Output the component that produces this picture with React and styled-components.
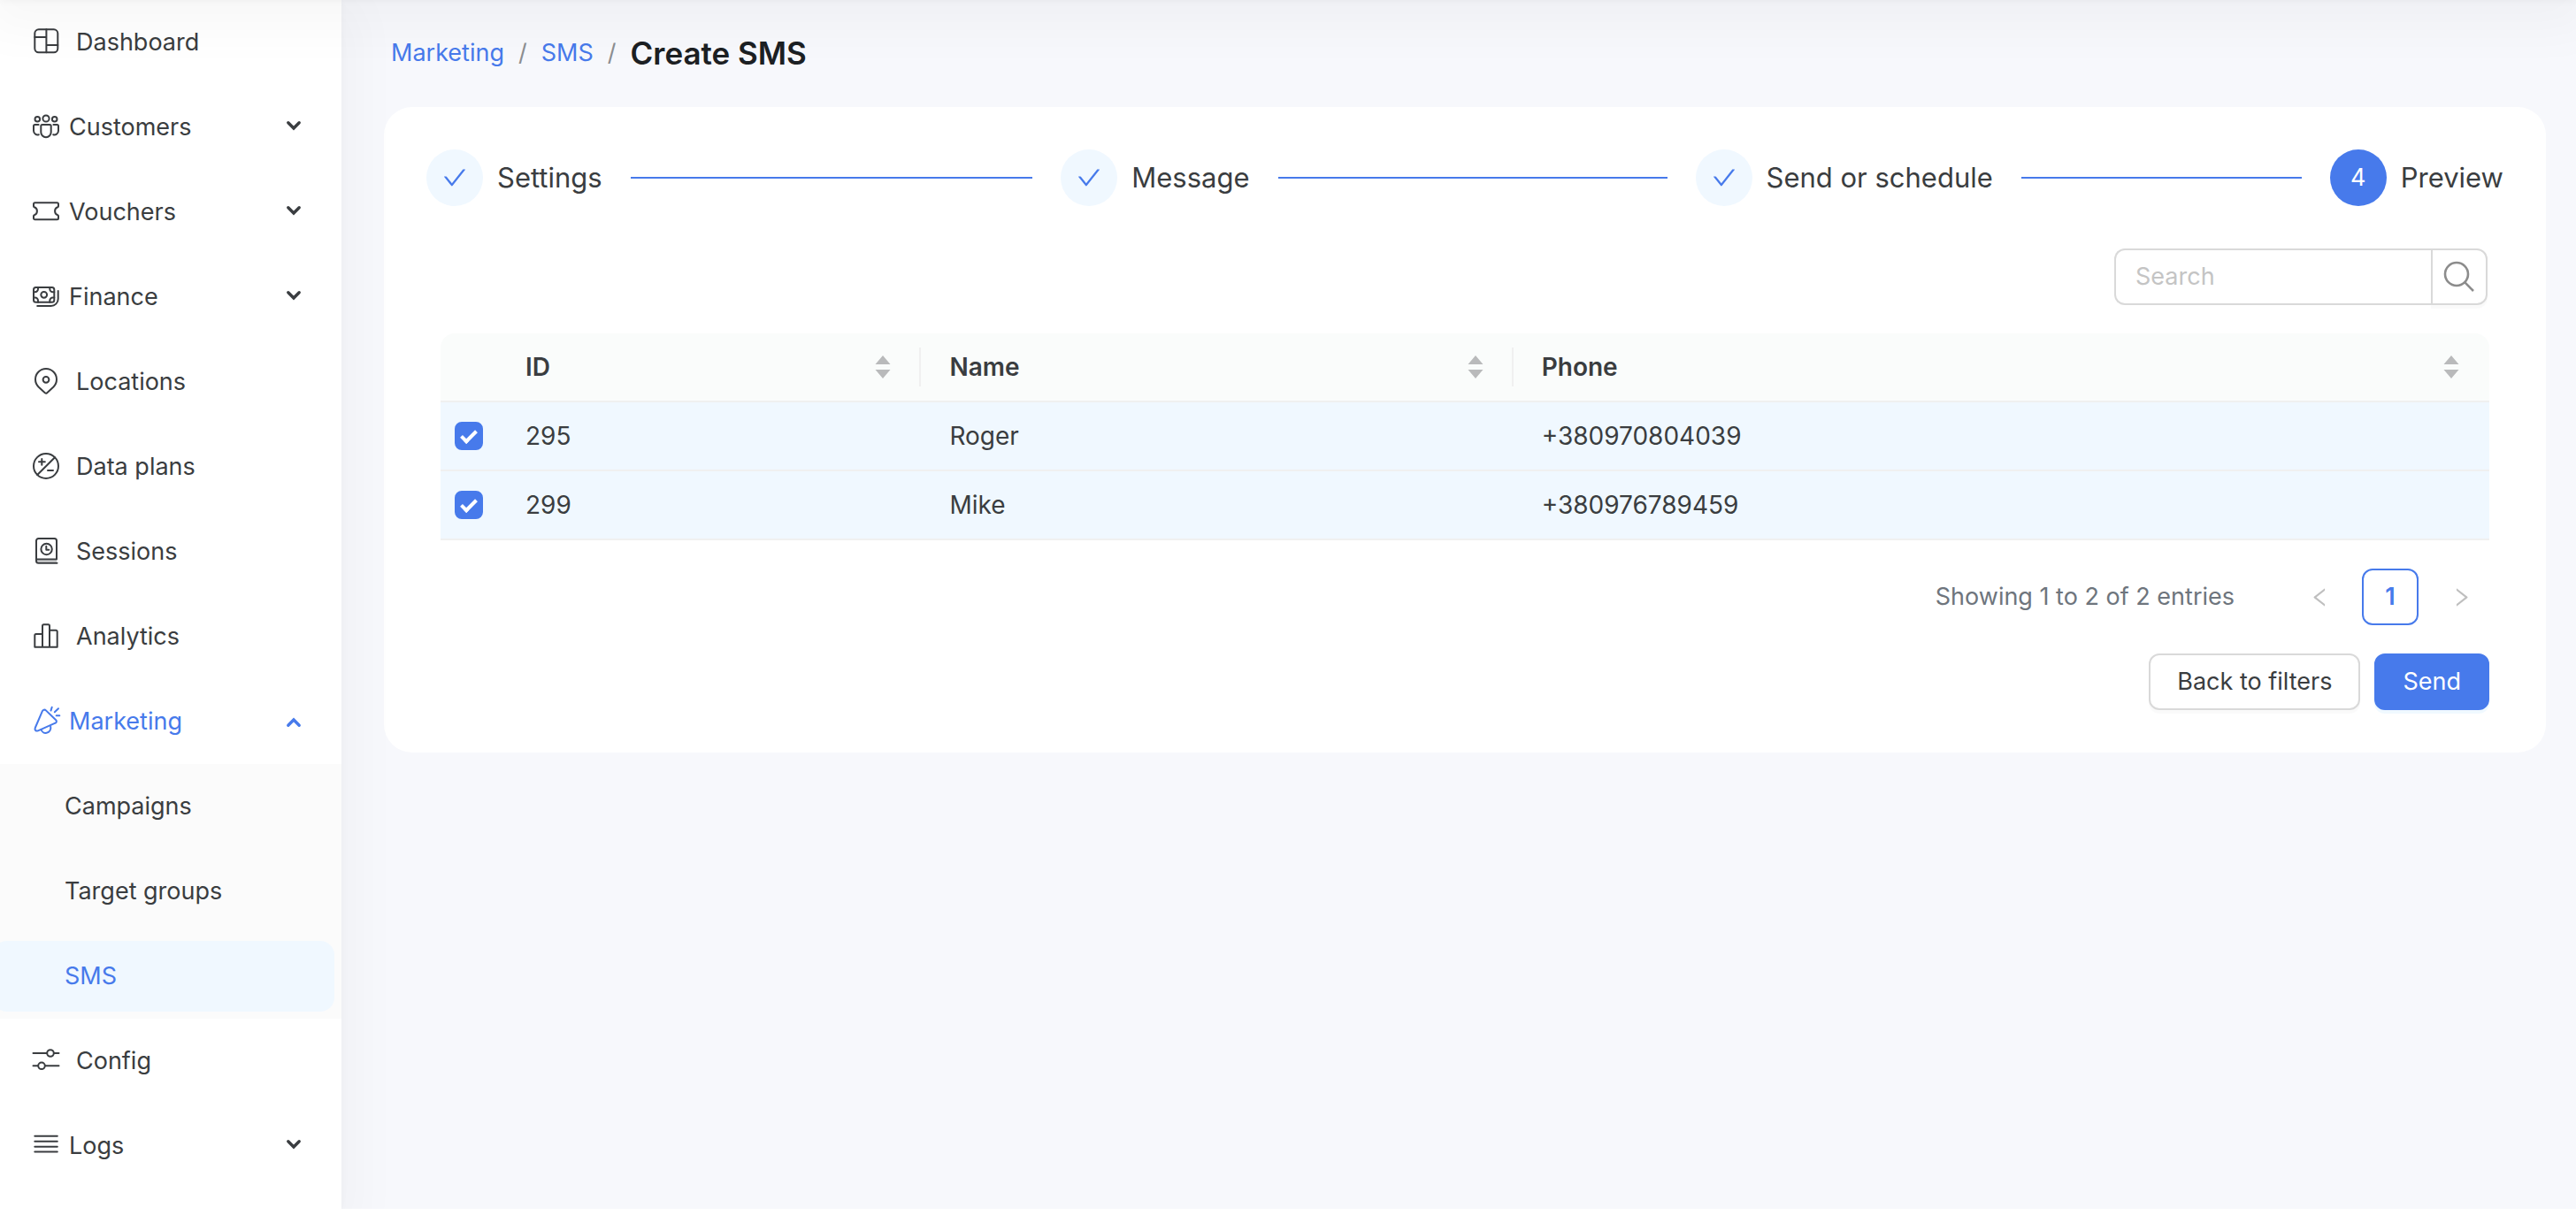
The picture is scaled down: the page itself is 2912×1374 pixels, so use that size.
import React, { useState } from 'react';
import styled, { createGlobalStyle, css } from 'styled-components';
import { AiOutlineCheck, AiOutlineLeft, AiOutlineRight } from 'react-icons/ai';

const icons = {
  dashboard: (
    <>
      <rect x='3.3' y='1.3' width='26' height='26' rx='4.5' />
      <path d='M16.4 1.3v26M3.3 10h13.1M16.4 19h12.9' />
    </>
  ),
  customers: (
    <>
      <circle cx='6.3' cy='6.7' r='2.8' />
      <circle cx='16' cy='6' r='3.6' />
      <circle cx='25.7' cy='6.7' r='2.8' />
      <path d='M11.8 13h8.4a1.5 1.5 0 0 1 1.5 1.5v7a5.7 5.7 0 0 1-11.4 0v-7a1.5 1.5 0 0 1 1.5-1.5z' />
      <path d='M7.6 13H3.5A1.5 1.5 0 0 0 2 14.5v5.3a4.6 4.6 0 0 0 5.8 4.5M24.4 13h4.1a1.5 1.5 0 0 1 1.5 1.5v5.3a4.6 4.6 0 0 1-5.8 4.5' />
    </>
  ),
  vouchers: (
    <path d='M3.5 5.3h25A1.5 1.5 0 0 1 30 6.8v2.4a1.2 1.2 0 0 1-.8 1.1 4.8 4.8 0 0 0 0 9 1.2 1.2 0 0 1 .8 1.1v2.4a1.5 1.5 0 0 1-1.5 1.5h-25A1.5 1.5 0 0 1 2 22.8v-2.4a1.2 1.2 0 0 1 .8-1.1 4.8 4.8 0 0 0 0-9A1.2 1.2 0 0 1 2 9.2V6.8a1.5 1.5 0 0 1 1.5-1.5z' />
  ),
  finance: (
    <>
      <rect x='2' y='5' width='23.3' height='16.7' rx='2.5' />
      <circle cx='13.7' cy='13.3' r='3.4' />
      <path d='M2 10.2h1.5a3.5 3.5 0 0 0 3.5-3.5V5M2 16.5h1.5A3.5 3.5 0 0 1 7 20v1.7M25.3 10.2h-1.5a3.5 3.5 0 0 1-3.5-3.5V5M25.3 16.5h-1.5a3.5 3.5 0 0 0-3.5 3.5v1.7' />
      <path d='M29.7 9v9a8 8 0 0 1-8 8H6.2' />
    </>
  ),
  locations: (
    <>
      <path d='M24.5 21.5 17.2 28.2a1.8 1.8 0 0 1-2.4 0L7.5 21.5a12 12 0 1 1 17 0z' />
      <circle cx='16' cy='13.3' r='3.4' />
    </>
  ),
  plans: (
    <>
      <circle cx='16' cy='15' r='14' />
      <path d='M6.2 25 26 5.2M11.3 7v6.800M8 10.300h6.800M18 20h6' />
    </>
  ),
  sessions: (
    <>
      <path d='M5 25.5h23V28H6.500z' stroke='none' fill='#d4d5d6' />
      <path d='M28 24.5v-21A2.500 2.500 0 0 0 25.500 1h-18A2.500 2.500 0 0 0 5 3.500v22.700a2.500 2.500 0 0 0 2.500 2.500H28.500M5 24.500h23' />
      <circle cx='16.600' cy='13' r='6.200' />
      <path d='M16.300 9.800v3.900h3' />
    </>
  ),
  analytics: (
    <path d='M12 27.700H3.300V14.500A1.500 1.500 0 0 1 4.800 13H12M12 27.700V3.800a1.500 1.500 0 0 1 1.500-1.500h5A1.500 1.500 0 0 1 20 3.800v23.900zM20 8.700h7.200a1.500 1.500 0 0 1 1.500 1.500v17.500H20' />
  ),
  marketing: (
    <>
      <path d='M11.900 4.200c.7-1.700 2.700-2.100 4-.8l11.300 10.900c1.200 1.200.8 2.800-.7 3.400L7 26.300c-2.300 1-4.200-.9-3.200-3.300z' />
      <path d='M10.600 24.900c.7 2.900 3.300 4.500 6.100 3.900 3.200-.6 5.300-3.700 4.500-7' />
      <path d='M22.700-.3 21.500 3.600M30 1.200l-4.200 4M27.700 9.300h3.600' />
    </>
  ),
  config: (
    <>
      <path d='M1.500 7h15.600M24.900 7h5.600M1.500 21.300h5.600M14.900 21.300h15.600' />
      <circle cx='21' cy='7' r='3.800' />
      <circle cx='11' cy='21.300' r='3.800' />
    </>
  ),
  logs: <path d='M3.300 4.700h25.500M3.300 10.700h25.500M3.300 16.700h25.500M3.300 22.400h25.500' />,
};

const menu = [
  { id: 1, icon: 'dashboard', title: 'Dashboard' },
  { id: 2, icon: 'customers', title: 'Customers', group: true },
  { id: 3, icon: 'vouchers', title: 'Vouchers', group: true },
  { id: 4, icon: 'finance', title: 'Finance', group: true },
  { id: 5, icon: 'locations', title: 'Locations' },
  { id: 6, icon: 'plans', title: 'Data plans' },
  { id: 7, icon: 'sessions', title: 'Sessions' },
  { id: 8, icon: 'analytics', title: 'Analytics' },
  {
    id: 9,
    icon: 'marketing',
    title: 'Marketing',
    group: true,
    children: ['Campaigns', 'Target groups', 'SMS'],
  },
  { id: 10, icon: 'config', title: 'Config' },
  { id: 11, icon: 'logs', title: 'Logs', group: true },
];

const steps = ['Settings', 'Message', 'Send or schedule', 'Preview'];

const columns = ['ID', 'Name', 'Phone'];

const people = [
  { id: 295, name: 'Roger', phone: '+380970804039' },
  { id: 299, name: 'Mike', phone: '+380976789459' },
];

const Sidebar = () => {
  return (
    <Aside>
      <MenuList>
        {menu.map((item) => {
          const { id, icon, title, group, children } = item;
          const Row = group ? MenuButton : MenuLink;
          const rowProps = group
            ? { type: 'button', 'aria-expanded': Boolean(children) }
            : { href: '#' };
          return (
            <li key={id}>
              <Row {...rowProps} $active={Boolean(children)}>
                <MenuIcon viewBox='0 0 32 32' aria-hidden='true'>
                  {icons[icon]}
                </MenuIcon>
                <span>{title}</span>
                {group && (
                  <Arrow viewBox='0 0 20 20' aria-hidden='true'>
                    <path
                      d={
                        children
                          ? 'M3.8 14.2 10 8l6.2 6.2'
                          : 'M3.8 4.8 10 11l6.2-6.2'
                      }
                    />
                  </Arrow>
                )}
              </Row>
              {children && (
                <SubMenu>
                  {children.map((child) => (
                    <li key={child}>
                      <SubLink href='#' $selected={child === 'SMS'}>
                        {child}
                      </SubLink>
                    </li>
                  ))}
                </SubMenu>
              )}
            </li>
          );
        })}
      </MenuList>
    </Aside>
  );
};

const Stepper = () => {
  return (
    <StepList>
      {steps.map((step, index) => {
        const current = index === steps.length - 1;
        return (
          <Step key={step} aria-current={current ? 'step' : undefined}>
            <StepMark $current={current}>
              {current ? index + 1 : <AiOutlineCheck />}
            </StepMark>
            <StepTitle>{step}</StepTitle>
          </Step>
        );
      })}
    </StepList>
  );
};

const Recipients = () => {
  const [selected, setSelected] = useState([295, 299]);

  const toggle = (id) => {
    setSelected(
      selected.includes(id)
        ? selected.filter((item) => item !== id)
        : [...selected, id]
    );
  };

  return (
    <Table>
      <colgroup>
        <Col $width='64px' />
        <Col $width='20.7%' />
        <Col $width='28.9%' />
        <Col $width='auto' />
      </colgroup>
      <thead>
        <tr>
          <Th aria-label='Selection' />
          {columns.map((column) => (
            <Th key={column} scope='col'>
              <HeadCell>
                {column}
                <SortButton type='button' aria-label={`Sort by ${column}`}>
                  <svg width='18' height='26' viewBox='0 0 18 26'>
                    <path d='M9 0l8.5 10H.5zM9 26l8.5-10H.5z' />
                  </svg>
                </SortButton>
              </HeadCell>
            </Th>
          ))}
        </tr>
      </thead>
      <tbody>
        {people.map((person) => {
          const { id, name, phone } = person;
          const checked = selected.includes(id);
          return (
            <BodyRow key={id} $selected={checked}>
              <td>
                <Checkbox
                  type='checkbox'
                  aria-label={`Select ${name}`}
                  checked={checked}
                  onChange={() => toggle(id)}
                />
              </td>
              <td>{id}</td>
              <td>{name}</td>
              <td>{phone}</td>
            </BodyRow>
          );
        })}
      </tbody>
    </Table>
  );
};

const App = () => {
  return (
    <>
      <GlobalStyle />
      <Header />
      <Layout>
        <Sidebar />
        <Main>
          <Breadcrumb aria-label='Breadcrumb'>
            <a href='#'>Marketing</a>
            <i>/</i>
            <a href='#'>SMS</a>
            <i>/</i>
            <h1>Create SMS</h1>
          </Breadcrumb>
          <Card>
            <Stepper />
            <SearchBox role='search'>
              <input type='text' placeholder='Search' aria-label='Search' />
              <button type='button' aria-label='Search'>
                <svg width='36' height='36' viewBox='0 0 36 36'>
                  <circle cx='15' cy='15' r='13' />
                  <path d='M24.2 24.2 34 34' />
                </svg>
              </button>
            </SearchBox>
            <Content>
              <Recipients />
              <Pagination>
                <p>Showing 1 to 2 of 2 entries</p>
                <PageButton type='button' aria-label='Previous page' disabled>
                  <AiOutlineLeft />
                </PageButton>
                <PageButton type='button' $current>
                  1
                </PageButton>
                <PageButton type='button' aria-label='Next page' disabled>
                  <AiOutlineRight />
                </PageButton>
              </Pagination>
              <Actions>
                <Button type='button'>Back to filters</Button>
                <Button type='button' $primary>
                  Send
                </Button>
              </Actions>
            </Content>
          </Card>
        </Main>
      </Layout>
    </>
  );
};

const GlobalStyle = createGlobalStyle`
:root {
  --clr-blue: #477aeb;
  --clr-blue-light: #f0f8ff;
  --clr-text: #3a3d40;
  --clr-border: #d9d9d9;
  --clr-line: #f0f0f0;
  --radius: 12px;
  --shadow: 0 18px 56px 16px rgba(0, 0, 0, 0.03), 0 2px 8px rgba(0, 0, 0, 0.03);
}
* {
  box-sizing: border-box;
}
body {
  margin: 0;
  overflow-x: hidden;
  background: #fff;
  color: var(--clr-text);
  font-family: Inter, 'Liberation Sans', sans-serif;
  font-size: 27px;
  line-height: 44px;
}
button, input {
  font: inherit;
  color: inherit;
}
button {
  cursor: pointer;
}
a {
  text-decoration: none;
}
ul, ol {
  margin: 0;
  padding: 0;
  list-style: none;
}
`;

// sits just above the window, only its shadow falls on the page
const Header = styled.header`
  position: absolute;
  top: -96px;
  left: 0;
  right: 0;
  height: 96px;
  z-index: 2;
  box-shadow: var(--shadow);
  pointer-events: none;
`;

const Layout = styled.div`
  display: flex;
  min-height: calc(100vh - 7px);
`;

const Aside = styled.aside`
  flex: 0 0 386px;
  position: relative;
  z-index: 1;
  background: #fff;
  box-shadow: var(--shadow);
`;

const MenuList = styled.ul`
  overflow: hidden;
`;

const rowStyle = css`
  display: flex;
  align-items: center;
  width: 100%;
  height: 96px;
  padding: 0 44px 0 36px;
  border: 0;
  background: none;
  text-align: left;
  color: ${({ $active }) => ($active ? 'var(--clr-blue)' : 'var(--clr-text)')};
`;

const MenuLink = styled.a`
  ${rowStyle}
  gap: 18px;
`;

const MenuButton = styled.button`
  ${rowStyle}
  gap: 10px;
`;

const MenuIcon = styled.svg`
  flex: none;
  width: 32px;
  height: 32px;
  overflow: visible;
  fill: none;
  stroke: currentColor;
  stroke-width: 2;
  stroke-linecap: round;
  stroke-linejoin: round;
`;

const Arrow = styled.svg`
  width: 20px;
  height: 20px;
  margin-left: auto;
  fill: none;
  stroke: currentColor;
  stroke-width: 3.4;
  stroke-linecap: round;
`;

const SubMenu = styled.ul`
  background: #fbfbfb;
  padding: 8px 0;
  display: grid;
  gap: 16px;
`;

const SubLink = styled.a`
  display: flex;
  align-items: center;
  height: 80px;
  margin: 0 8px 0 -8px;
  padding-left: 81px;
  border-radius: 16px;
  color: ${({ $selected }) =>
    $selected ? 'var(--clr-blue)' : 'var(--clr-text)'};
  background: ${({ $selected }) =>
    $selected ? 'var(--clr-blue-light)' : 'transparent'};
`;

const Main = styled.main`
  flex: 1;
  min-width: 0;
  padding: 36px 34px 48px 48px;
  background: #f7f8fc;
`;

const Breadcrumb = styled.nav`
  display: flex;
  align-items: center;
  gap: 16px;
  margin-bottom: 37px;
  padding-left: 8px;
  line-height: 48px;
  a {
    color: var(--clr-blue);
  }
  i {
    font-style: normal;
    color: #8c8e91;
  }
  h1 {
    margin: 0;
    font-size: 35px;
    font-weight: 600;
    color: #1c2023;
  }
`;

const Card = styled.section`
  padding: 48px;
  border-radius: 32px;
  background: #fff;
`;

const StepList = styled.ol`
  display: flex;
  margin-bottom: 48px;
`;

const Step = styled.li`
  flex: 1;
  display: flex;
  align-items: center;
  gap: 16px;
  font-size: 31px;
  white-space: nowrap;
  &:last-child {
    flex: none;
  }
  &:not(:last-child)::after {
    content: '';
    flex: 1;
    height: 2px;
    margin: 0 32px 0 16px;
    background: var(--clr-blue);
  }
`;

const StepMark = styled.span`
  flex: none;
  display: grid;
  place-items: center;
  width: 64px;
  height: 64px;
  border-radius: 50%;
  font-size: 27px;
  color: ${({ $current }) => ($current ? '#fff' : 'var(--clr-blue)')};
  background: ${({ $current }) =>
    $current ? 'var(--clr-blue)' : 'var(--clr-blue-light)'};
  svg {
    width: 30px;
    height: 30px;
  }
`;

const StepTitle = styled.span`
  color: var(--clr-text);
`;

const SearchBox = styled.div`
  display: flex;
  width: 422px;
  height: 64px;
  margin: 0 18px 32px auto;
  input {
    flex: 1;
    min-width: 0;
    padding: 0 22px;
    border: 2px solid var(--clr-border);
    border-right: 0;
    border-radius: var(--radius) 0 0 var(--radius);
    background: #fff;
    outline: none;
  }
  input::placeholder {
    color: #c4c4c4;
  }
  button {
    display: grid;
    place-items: center;
    width: 64px;
    padding: 0;
    border: 2px solid var(--clr-border);
    border-radius: 0 var(--radius) var(--radius) 0;
    background: #fff;
    box-shadow: 0 4px 0 rgba(0, 0, 0, 0.02);
  }
  svg {
    fill: none;
    stroke: #8c8c8c;
    stroke-width: 2.6;
  }
`;

const Content = styled.div`
  padding: 0 16px;
`;

const Table = styled.table`
  width: 100%;
  table-layout: fixed;
  border-collapse: separate;
  border-spacing: 0;
  font-size: 28px;
  td {
    height: 78px;
    padding: 0 32px;
    border-bottom: 2px solid var(--clr-line);
  }
  td:first-child {
    padding: 0 16px;
  }
`;

const Col = styled.col`
  width: ${({ $width }) => $width};
`;

const Th = styled.th`
  height: 78px;
  padding: 0;
  border-bottom: 2px solid var(--clr-line);
  background: #fafcfb;
  font-weight: 600;
  text-align: left;
  &:first-child {
    border-top-left-radius: 16px;
  }
  &:last-child {
    border-top-right-radius: 16px;
  }
`;

const HeadCell = styled.div`
  display: flex;
  align-items: center;
  justify-content: space-between;
  padding: 0 32px;
  border-right: 2px solid var(--clr-line);
  ${Th}:last-child & {
    border-right-color: transparent;
  }
`;

const SortButton = styled.button`
  display: flex;
  padding: 0;
  border: 0;
  background: none;
  fill: #b9babb;
`;

const BodyRow = styled.tr`
  background: ${({ $selected }) =>
    $selected ? 'var(--clr-blue-light)' : '#fff'};
`;

const Checkbox = styled.input`
  appearance: none;
  display: block;
  position: relative;
  width: 32px;
  height: 32px;
  margin: 0;
  border: 2px solid var(--clr-border);
  border-radius: 8px;
  background: #fff;
  &:checked {
    border-color: var(--clr-blue);
    background: var(--clr-blue);
  }
  &:checked::after {
    content: '';
    box-sizing: border-box;
    position: absolute;
    top: 4px;
    left: 9px;
    width: 10px;
    height: 18px;
    border: solid #fff;
    border-width: 0 4px 4px 0;
    transform: rotate(45deg);
  }
`;

const Pagination = styled.nav`
  display: flex;
  align-items: center;
  justify-content: flex-end;
  gap: 16px;
  margin: 32px 0;
  p {
    margin: 0 48px 0 0;
    color: #6e757d;
  }
`;

const PageButton = styled.button`
  display: grid;
  place-items: center;
  width: 64px;
  height: 64px;
  padding: 0;
  border: 2px solid ${({ $current }) =>
    $current ? 'var(--clr-blue)' : 'transparent'};
  border-radius: var(--radius);
  background: #fff;
  color: var(--clr-blue);
  font-weight: 600;
  &:disabled {
    color: #bfbfbf;
    cursor: not-allowed;
  }
`;

const Actions = styled.div`
  display: flex;
  justify-content: flex-end;
  gap: 16px;
`;

const Button = styled.button`
  height: 64px;
  padding: 0 30px;
  border: 2px solid ${({ $primary }) =>
    $primary ? 'var(--clr-blue)' : 'var(--clr-border)'};
  border-radius: var(--radius);
  background: ${({ $primary }) => ($primary ? 'var(--clr-blue)' : '#fff')};
  color: ${({ $primary }) => ($primary ? '#fff' : 'var(--clr-text)')};
  box-shadow: 0 4px 0
    ${({ $primary }) =>
      $primary ? 'rgba(5, 145, 255, 0.06)' : 'rgba(0, 0, 0, 0.02)'};
`;

export default App;
